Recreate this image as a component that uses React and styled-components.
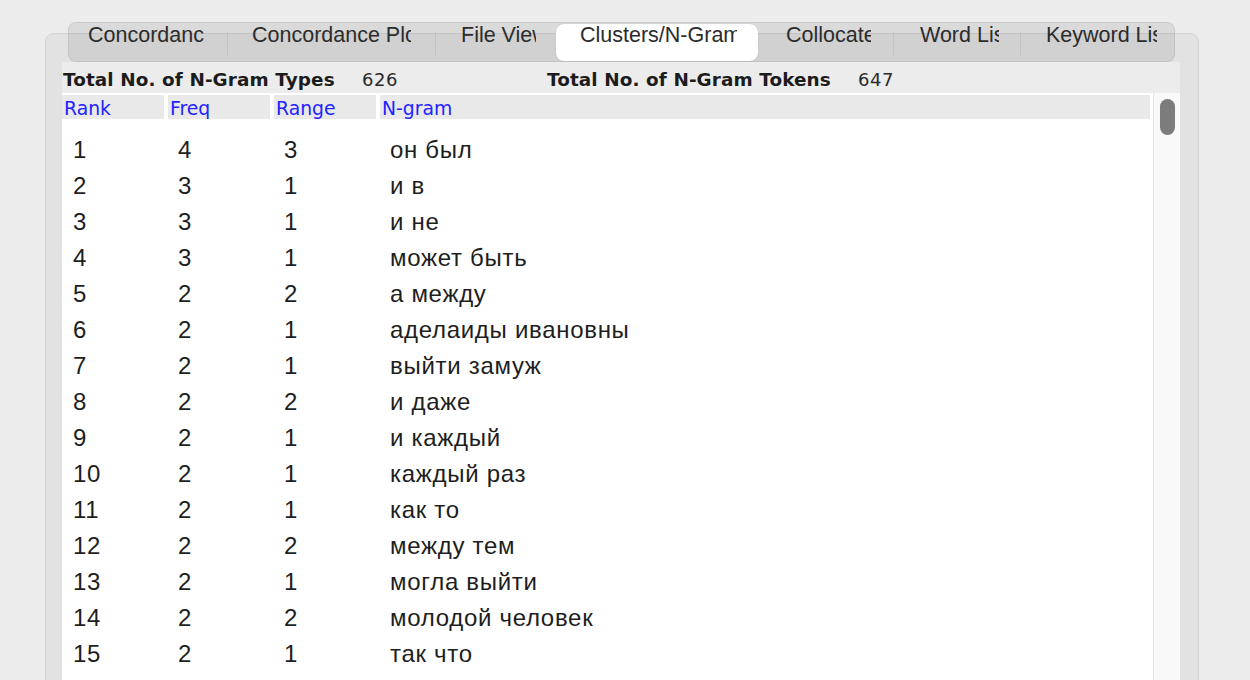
import React from "react";
import styled, { createGlobalStyle } from "styled-components";

const GlobalStyle = createGlobalStyle`
	html, body {
		margin: 0;
		padding: 0;
		background: #ececec;
		overflow: hidden;
	}
	* {
		box-sizing: border-box;
	}
`;

const Page = styled.div`
	width: 1250px;
	height: 680px;
	overflow: hidden;
	padding: 33px 51px 0 45px;
	background: #ececec;
`;

const Panel = styled.section`
	min-height: 720px;
	border: 1px solid #d3d3d3;
	border-radius: 9px;
	background: #e2e2e2;
	padding: 0 18px 0 16px;
	display: flex;
	flex-direction: column;
`;

const TabBar = styled.div`
	margin: -12px 5px 0 6px;
	height: 40px;
	border: 1px solid rgba(0, 0, 0, 0.07);
	border-radius: 8px;
	background: rgba(0, 0, 0, 0.075);
	display: flex;
`;

const Tab = styled.div`
	flex: none;
	width: ${({ $w }) => $w}px;
	padding-left: ${({ $pl }) => $pl}px;
	margin-top: ${({ $active }) => ($active ? "1px" : "0")};
	height: ${({ $active }) => ($active ? "37px" : "38px")};
	background: ${({ $active }) => ($active ? "#ffffff" : "transparent")};
	border-radius: 8px;
	box-shadow: ${({ $active }) =>
		$active ? "0 0 1px rgba(0, 0, 0, 0.25)" : "none"};
`;

const TabLabel = styled.span`
	display: block;
	width: ${({ $lw }) => $lw}px;
	overflow: hidden;
	white-space: nowrap;
	font-family: "Liberation Sans", Arial, sans-serif;
	font-size: 21.5px;
	line-height: 24px;
	margin-top: ${({ $active }) => ($active ? "-1px" : "0")};
	color: #2c2c2c;
`;

const TabSep = styled.div`
	flex: none;
	width: 1px;
	height: 23px;
	margin-top: 9px;
	background: #c4c4c4;
`;

const Content = styled.div`
	display: flex;
	flex-direction: column;
	flex: 1;
	background: #ececec;
`;

const StatsRow = styled.div`
	height: 31px;
	padding-top: 3px;
	display: grid;
	grid-template-columns: 299px 185px 311px 1fr;
	align-items: center;
	padding-left: 1px;
	font-family: "DejaVu Sans", Verdana, sans-serif;
	font-size: 18.4px;
	color: #1c1c1c;
`;

const StatLabel = styled.span`
	font-weight: bold;
	letter-spacing: 0.1px;
`;

const StatValue = styled.span`
	font-family: "DejaVu Sans", Verdana, sans-serif;
	font-size: 18px;
	letter-spacing: 0.6px;
	color: #2a2a2a;
`;

const TableBox = styled.div`
	flex: 1;
	display: flex;
	background: #ffffff;
`;

const TableMain = styled.div`
	flex: 1;
	padding-top: 2px;
	display: flex;
	flex-direction: column;
`;

const HeaderRow = styled.div`
	display: grid;
	grid-template-columns: 102px 102px 102px 1fr;
	column-gap: 4px;
	height: 24px;
	margin-right: 3px;
`;

const HeaderCell = styled.div`
	background: #e9e9e9;
	padding: 3px 0 0 2px;
	font-family: "DejaVu Sans", Verdana, sans-serif;
	font-size: 18.8px;
	line-height: 21px;
	color: #2323ff;
`;

const Body = styled.div`
	padding-top: 13px;
`;

const Row = styled.div`
	display: grid;
	grid-template-columns: 102px 102px 102px 1fr;
	column-gap: 4px;
	height: 36px;
	align-items: center;
	font-family: "Liberation Sans", Arial, sans-serif;
	font-size: 24px;
	letter-spacing: 0.7px;
	color: #1e1e1e;
`;

const Cell = styled.div`
	padding-left: ${({ $pl }) => $pl || 10}px;
	white-space: nowrap;
`;

const ScrollTrack = styled.div`
	flex: none;
	width: 27px;
	background: #f9f9f9;
	border-left: 1px solid #e6e6e6;
	padding: 6px 0 0 6px;
`;

const ScrollThumb = styled.div`
	width: 15px;
	height: 36px;
	border-radius: 8px;
	background: #7c7c7c;
`;

const tabs = [
	{ label: "Concordance", w: 158, pl: 19, lw: 116, sep: true },
	{ label: "Concordance Plot", w: 207, pl: 24, lw: 159, sep: true },
	{ label: "File View", w: 120, pl: 25, lw: 75 },
	{ label: "Clusters/N-Grams", w: 202, pl: 24, lw: 157, active: true },
	{ label: "Collocates", w: 135, pl: 28, lw: 85, sep: true },
	{ label: "Word List", w: 126, pl: 26, lw: 79, sep: true },
	{ label: "Keyword List", w: 153, pl: 25, lw: 111 },
];

const rows = [
	[1, 4, 3, "он был"],
	[2, 3, 1, "и в"],
	[3, 3, 1, "и не"],
	[4, 3, 1, "может быть"],
	[5, 2, 2, "а между"],
	[6, 2, 1, "аделаиды ивановны"],
	[7, 2, 1, "выйти замуж"],
	[8, 2, 2, "и даже"],
	[9, 2, 1, "и каждый"],
	[10, 2, 1, "каждый раз"],
	[11, 2, 1, "как то"],
	[12, 2, 2, "между тем"],
	[13, 2, 1, "могла выйти"],
	[14, 2, 2, "молодой человек"],
	[15, 2, 1, "так что"],
	[16, 2, 2, "что он"],
];

export default function App() {
	return (
		<>
			<GlobalStyle />
			<Page>
				<Panel>
					<TabBar>
						{tabs.map((t) => (
							<React.Fragment key={t.label}>
								<Tab $w={t.w} $pl={t.pl} $active={t.active}>
									<TabLabel $lw={t.lw} $active={t.active}>
										{t.label}
									</TabLabel>
								</Tab>
								{t.sep && <TabSep />}
							</React.Fragment>
						))}
					</TabBar>
					<Content>
						<StatsRow>
							<StatLabel>Total No. of N-Gram Types</StatLabel>
							<StatValue>626</StatValue>
							<StatLabel>Total No. of N-Gram Tokens</StatLabel>
							<StatValue>647</StatValue>
						</StatsRow>
						<TableBox>
							<TableMain>
								<HeaderRow>
									<HeaderCell>Rank</HeaderCell>
									<HeaderCell>Freq</HeaderCell>
									<HeaderCell>Range</HeaderCell>
									<HeaderCell>N-gram</HeaderCell>
								</HeaderRow>
								<Body>
									{rows.map(([rank, freq, range, gram]) => (
										<Row key={rank}>
											<Cell $pl={11}>{rank}</Cell>
											<Cell>{freq}</Cell>
											<Cell>{range}</Cell>
											<Cell>{gram}</Cell>
										</Row>
									))}
								</Body>
							</TableMain>
							<ScrollTrack>
								<ScrollThumb />
							</ScrollTrack>
						</TableBox>
					</Content>
				</Panel>
			</Page>
		</>
	);
}
